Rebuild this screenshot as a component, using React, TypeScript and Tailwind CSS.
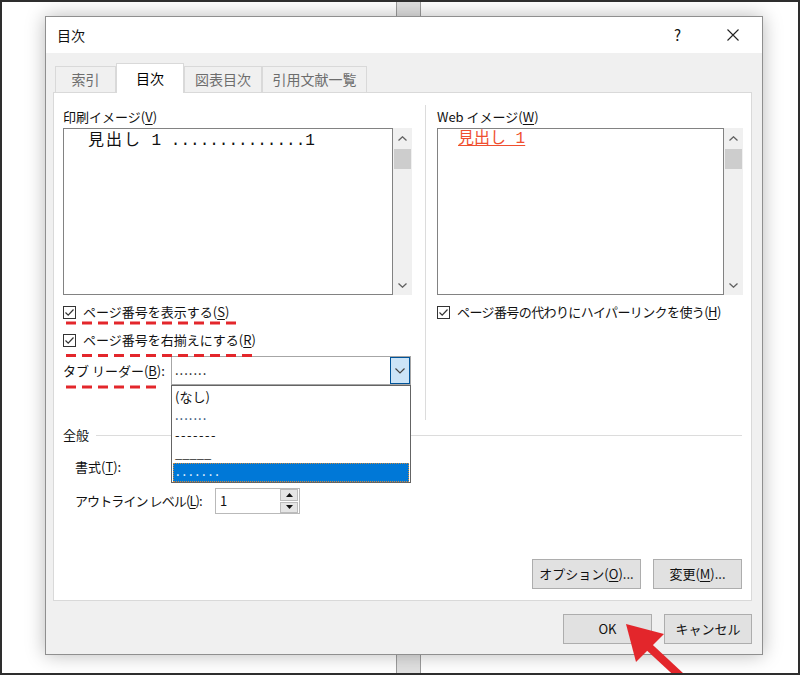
import React from "react";

function U({ children }: { children: React.ReactNode }) {
  return <span className="underline underline-offset-2">{children}</span>;
}

function Chev({ up }: { up?: boolean }) {
  return (
    <svg width="9" height="5" viewBox="0 0 9 5">
      <path
        d={up ? "M0.5 4.5 L4.5 0.8 L8.5 4.5" : "M0.5 0.5 L4.5 4.2 L8.5 0.5"}
        fill="none"
        stroke="#606060"
        strokeWidth="1.3"
      />
    </svg>
  );
}

function ScrollBar() {
  return (
    <div className="w-[19px] h-full bg-[#f0f0f0] flex flex-col">
      <div className="h-[21px] flex items-center justify-center">
        <Chev up />
      </div>
      <div className="h-[20px] mx-[1px] bg-[#cdcdcd]" />
      <div className="flex-1" />
      <div className="h-[20px] flex items-center justify-center">
        <Chev />
      </div>
    </div>
  );
}

function CheckBox({ children }: { children: React.ReactNode }) {
  return (
    <div className="flex items-center h-[20px] gap-[7px]">
      <span className="w-[13px] h-[13px] border border-[#333] bg-white flex items-center justify-center">
        <svg width="11" height="11" viewBox="0 0 11 11">
          <path d="M1.5 5.5 L4.2 8.2 L9.5 2.5" fill="none" stroke="#333" strokeWidth="1.2" />
        </svg>
      </span>
      <span className="text-[13px] leading-[20px] whitespace-nowrap">{children}</span>
    </div>
  );
}

function Button({ label, w }: { label: React.ReactNode; w: string }) {
  return (
    <div
      className={`${w} h-[30px] bg-[#e1e1e1] border border-[#adadad] flex items-center justify-center text-[13px] whitespace-nowrap`}
    >
      {label}
    </div>
  );
}

function Tab({ label, w, active }: { label: string; w: string; active?: boolean }) {
  if (active) {
    return (
      <div
        className={`${w} h-[30px] mb-[-1px] relative z-10 bg-white border-x border-t border-[#d9d9d9] flex items-center justify-center text-[14px] text-black`}
      >
        {label}
      </div>
    );
  }
  return (
    <div
      className={`${w} h-[26px] border-l border-t border-r border-[#d9d9d9] flex items-center justify-center text-[14px] text-[#6d6d6d]`}
    >
      {label}
    </div>
  );
}

export default function App() {
  return (
    <div className="relative w-[800px] h-[675px] overflow-hidden bg-white pl-[45px] pt-[16px] font-['Noto_Sans_CJK_JP','Noto_Sans',sans-serif] text-[#111]">
      {/* document page edge behind the dialog */}
      <div className="absolute left-[396px] top-0 w-[25px] h-full bg-[#e1e1e1] border-x border-[#9c9c9c]" />

      {/* dialog */}
      <div className="relative z-10 w-[718px] h-[639px] border border-[#8f8f8f] bg-[#f0f0f0] shadow-[0_0_18px_rgba(0,0,0,0.28)] flex flex-col">
        <div className="h-[36px] bg-white flex items-center pl-[11px] pr-[23px]">
          <span className="text-[14px]">目次</span>
          <span className="ml-auto text-[15px] mr-[46px]">?</span>
          <svg width="12" height="12" viewBox="0 0 12 12">
            <path d="M0.5 0.5 L11.5 11.5 M11.5 0.5 L0.5 11.5" stroke="#222" strokeWidth="1.1" />
          </svg>
        </div>

        <div className="pt-[10px] pl-[7px] pr-[10px] flex flex-col">
          <div className="h-[29px] flex items-end pl-[2px]">
            <Tab label="索引" w="w-[61px]" />
            <Tab label="目次" w="w-[68px]" active />
            <Tab label="図表目次" w="w-[78px]" />
            <Tab label="引用文献一覧" w="w-[105px]" />
          </div>

          <div className="h-[509px] bg-white border border-[#d9d9d9] flex flex-col pt-[12px]">
            {/* previews */}
            <div className="h-[315px] flex pl-[9px]">
              <div className="w-[349px] pt-[2px] flex flex-col">
                <div className="h-[20px] leading-[20px] text-[13px]">
                  印刷イメージ(<U>V</U>)
                </div>
                <div className="mt-[1px] h-[167px] flex">
                  <div className="w-[330px] h-full border border-[#828282] bg-white pl-[24px] pt-[2px]">
                    <div className="font-['Liberation_Mono','Noto_Sans_CJK_JP',monospace] text-[16px] leading-[20px] text-[#111] whitespace-pre">
                      <span className="tracking-[2px]">見出し</span> 1 ..............1
                    </div>
                  </div>
                  <ScrollBar />
                </div>
                <div className="mt-[7px]">
                  <CheckBox>
                    ページ番号を表示する(<U>S</U>)
                  </CheckBox>
                </div>
                <div className="mt-[8px]">
                  <CheckBox>
                    ページ番号を右揃えにする(<U>R</U>)
                  </CheckBox>
                </div>
                <div className="mt-[6px] flex items-center">
                  <span className="w-[108px] text-[13px] leading-[20px] whitespace-nowrap">
                    タブ リーダー(<U>B</U>):
                  </span>
                  <div className="relative w-[240px] h-[29px] border border-[#a6a6a6] bg-white flex">
                    <div className="flex-1 pl-[3px] text-[13px] leading-[26px] tracking-[1px]">.......</div>
                    <div className="w-[20px] h-full bg-[#cce4f7] border border-[#005499] flex items-center justify-center">
                      <svg width="10" height="6" viewBox="0 0 10 6">
                        <path d="M0.5 0.5 L5 5 L9.5 0.5" fill="none" stroke="#444" strokeWidth="1.2" />
                      </svg>
                    </div>
                    {/* open list */}
                    <div className="absolute left-[-1px] top-[28px] w-[240px] h-[98px] border border-[#646464] bg-white z-20 pt-[1px] text-[13px]">
                      <div className="h-[19px] leading-[19px] px-[3px]">(なし)</div>
                      <div className="h-[19px] leading-[17px] px-[3px] tracking-[1px] text-[#25466e]">.......</div>
                      <div className="h-[19px] leading-[19px] px-[3px] tracking-[1.5px]">-------</div>
                      <div className="h-[19px] leading-[17px] px-[3px] text-[#333]">_____</div>
                      <div className="h-[19px] mx-[1px] bg-[#0078d7] border border-dotted border-[#d08a3c] leading-[13px] px-[2px] text-white whitespace-pre">
                        . . . . . . .
                      </div>
                    </div>
                  </div>
                </div>
              </div>

              <div className="ml-[13px] w-px h-full bg-[#dcdcdc]" />

              <div className="ml-[11px] w-[306px] pt-[2px] flex flex-col">
                <div className="h-[20px] leading-[20px] text-[13px]">
                  Web イメージ(<U>W</U>)
                </div>
                <div className="mt-[1px] h-[167px] flex">
                  <div className="w-[287px] h-full border border-[#828282] bg-white pl-[20px]">
                    <div className="font-['Liberation_Mono','Noto_Sans_CJK_JP',monospace] text-[16px] leading-[20px] text-[#ef4f2f] underline underline-offset-2 whitespace-pre">
                      見出し 1
                    </div>
                  </div>
                  <ScrollBar />
                </div>
                <div className="mt-[7px] tracking-[-0.6px]">
                  <CheckBox>
                    ページ番号の代わりにハイパーリンクを使う(<U>H</U>)
                  </CheckBox>
                </div>
              </div>
            </div>

            {/* general */}
            <div className="mt-[5px] h-[20px] flex items-center pl-[9px] pr-[9px]">
              <span className="text-[13px] leading-[20px]">全般</span>
              <div className="flex-1 h-px bg-[#dcdcdc] ml-[7px]" />
            </div>
            <div className="mt-[12px] h-[20px] pl-[21px] text-[13px] leading-[20px]">
              書式(<U>T</U>):
            </div>
            <div className="mt-[11px] h-[26px] pl-[21px] flex items-center">
              <span className="w-[140px] text-[13px] leading-[20px] whitespace-nowrap tracking-[-0.9px]">
                アウトライン レベル(<U>L</U>):
              </span>
              <div className="w-[85px] h-[26px] border border-[#b9b9b9] bg-white flex items-center pl-[4px] pr-[1px]">
                <span className="flex-1 text-[13px] leading-[20px]">1</span>
                <div className="w-[18px] h-[24px] flex flex-col gap-[1px]">
                  <div className="flex-1 bg-[#e5e5e5] border border-[#bcbcbc] flex items-center justify-center">
                    <svg width="7" height="4" viewBox="0 0 7 4">
                      <path d="M0 4 L3.5 0 L7 4 Z" fill="#111" />
                    </svg>
                  </div>
                  <div className="flex-1 bg-[#e5e5e5] border border-[#bcbcbc] flex items-center justify-center">
                    <svg width="7" height="4" viewBox="0 0 7 4">
                      <path d="M0 0 L3.5 4 L7 0 Z" fill="#111" />
                    </svg>
                  </div>
                </div>
              </div>
            </div>

            <div className="mt-auto mb-[11px] pr-[9px] flex justify-end gap-[12px]">
              <Button w="w-[109px]" label={<>オプション(<U>O</U>)...</>} />
              <Button w="w-[89px]" label={<>変更(<U>M</U>)...</>} />
            </div>
          </div>

          <div className="mt-[13px] flex justify-end gap-[12px]">
            <Button w="w-[89px]" label="OK" />
            <Button w="w-[88px]" label="キャンセル" />
          </div>
        </div>
      </div>

      {/* annotations */}
      <svg className="absolute inset-0 z-30 pointer-events-none" width="800" height="675" viewBox="0 0 800 675">
        <g stroke="#e3262b" strokeWidth="3" strokeDasharray="10 6">
          <line x1="66" y1="323" x2="237" y2="323" />
          <line x1="66" y1="355.5" x2="258" y2="355.5" />
          <line x1="66" y1="387" x2="160" y2="387" />
        </g>
        <line x1="648" y1="646" x2="690" y2="685" stroke="#e3262b" strokeWidth="8" />
        <polygon points="626,624 664,634 636,662" fill="#e3262b" />
      </svg>

      <div className="absolute inset-0 z-40 border-2 border-[#2e2e2e] pointer-events-none" />
    </div>
  );
}
